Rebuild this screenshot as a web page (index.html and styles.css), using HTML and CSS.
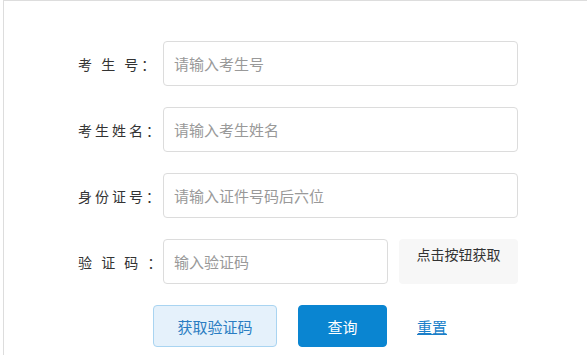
FILE: index.html
```html
<!DOCTYPE html>
<html lang="zh-CN">
<head>
	<meta charset="UTF-8">
	<meta name="viewport" content="width=device-width, initial-scale=1.0">
	<title>成绩查询</title>
	<link rel="stylesheet" href="styles.css">
</head>
<body>
	<div class="panel">
		<form action="">
			<div class="form-row">
				<label class="form-label" for="examNo">考 生 号：</label>
				<input type="text" id="examNo" class="form-control" placeholder="请输入考生号">
			</div>
			<div class="form-row">
				<label class="form-label" for="name">考生姓名：</label>
				<input type="text" id="name" class="form-control" placeholder="请输入考生姓名">
			</div>
			<div class="form-row">
				<label class="form-label" for="idNo">身份证号：</label>
				<input type="text" id="idNo" class="form-control" placeholder="请输入证件号码后六位">
			</div>
			<div class="form-row">
				<label class="form-label" for="code">验 证 码 ：</label>
				<input type="text" id="code" class="form-control code-input" placeholder="输入验证码">
				<div class="code-box">点击按钮获取</div>
			</div>
			<div class="btn-row">
				<button type="button" class="btn btn-light">获取验证码</button>
				<button type="submit" class="btn btn-primary">查询</button>
				<a href="#" class="reset-link">重置</a>
			</div>
		</form>
	</div>
</body>
</html>
```

FILE: styles.css
```css
body{
	margin: 0; background: #fff;
	font-family: "Noto Sans CJK SC", "Noto Sans", sans-serif;
	color: #333;
}
.panel{
	margin-left: 3px; height: 355px; box-sizing: border-box;
	border-top: 1px solid #dddddd; border-left: 1px solid #dddddd;
	padding-top: 40px;
}
.form-row{
	display: flex; align-items: center;
	margin-bottom: 21px; height: 45px;
}
.form-label{
	width: 85px; margin-left: 74px;
	font-size: 14px; color: #333; letter-spacing: 3px;
	white-space: pre;
}
.form-control{
	width: 355px; height: 45px; box-sizing: border-box;
	border: 1px solid #dcdcdc; border-radius: 4px;
	padding: 0 10px; font-size: 15px; font-family: inherit; color: #333;
	outline: none;
}
.form-control::placeholder{ color: #999; }
.code-input{ width: 225px; }
.code-box{
	width: 119px; height: 45px; margin-left: 11px;
	background: #f7f7f7; border-radius: 4px;
	text-align: center; line-height: 30px; font-size: 14px; color: #333;
}
.btn-row{
	display: flex; align-items: center;
	margin-left: 149px;
}
.btn{
	height: 42px; box-sizing: border-box; border-radius: 4px;
	font-size: 15px; font-family: inherit; cursor: pointer;
}
.btn-light{
	width: 124px; background: #e5f1fb; border: 1px solid #a9d4f1; color: #2a7dc2;
}
.btn-primary{
	width: 89px; margin-left: 21px;
	background: #0a85d1; border: 1px solid #0a85d1; color: #fff;
}
.reset-link{
	margin-left: 30px; font-size: 15px; color: #1a7fc9;
	text-decoration: underline;
}
```
